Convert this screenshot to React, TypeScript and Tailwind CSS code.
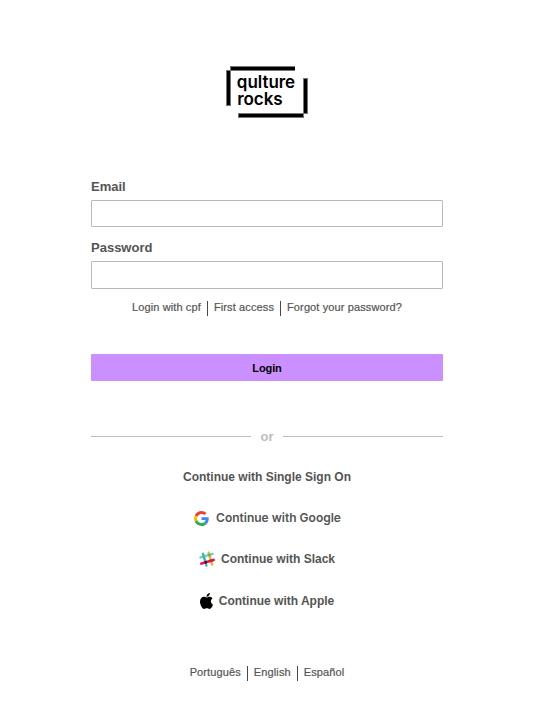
import React from "react";

function Logo() {
  return (
    <svg width="82" height="53" viewBox="226 66 82 53" role="img" aria-label="qulture rocks">
      <g fill="#777777">
        <path d="M230 66h65v5h-65zM226 70h5v36h-5zM303 78h5v36h-5zM238 113h66v5h-66z" />
      </g>
      <g fill="#000000">
        <path d="M231 67h64v3h-64zM227 71h3v34h-3zM304 79h3v34h-3zM239 114h64v3h-64z" />
        <text fontFamily="Inter, sans-serif" fontWeight="600" fontSize="17" letterSpacing="-0.03">
          <tspan x="236.8" y="88">qulture</tspan>
          <tspan x="237.3" y="105" letterSpacing="-0.1">rocks</tspan>
        </text>
      </g>
    </svg>
  );
}

function GoogleIcon() {
  return (
    <svg width="15" height="15" viewBox="0 0 48 48" aria-hidden="true">
      <path fill="#EA4335" d="M24 9.5c3.54 0 6.71 1.22 9.21 3.6l6.85-6.85C35.9 2.38 30.47 0 24 0 14.62 0 6.51 5.38 2.56 13.22l7.98 6.19C12.43 13.72 17.74 9.5 24 9.5z" />
      <path fill="#4285F4" d="M46.98 24.55c0-1.57-.15-3.09-.38-4.55H24v9.02h12.94c-.58 2.96-2.26 5.48-4.78 7.18l7.73 6c4.51-4.18 7.09-10.36 7.09-17.65z" />
      <path fill="#FBBC05" d="M10.53 28.59c-.48-1.45-.76-2.99-.76-4.59s.27-3.14.76-4.59l-7.98-6.19C.92 16.46 0 20.12 0 24s.92 7.54 2.56 10.78l7.97-6.19z" />
      <path fill="#34A853" d="M24 48c6.48 0 11.93-2.13 15.89-5.81l-7.73-6c-2.15 1.45-4.92 2.3-8.16 2.3-6.26 0-11.57-4.22-13.47-9.91l-7.98 6.19C6.51 42.62 14.62 48 24 48z" />
    </svg>
  );
}

function SlackIcon() {
  return (
    <svg width="16" height="16" viewBox="0 0 16 16" aria-hidden="true" fill="none" strokeWidth="2.4" strokeLinecap="round">
      <path stroke="#ECB22E" d="M9.6 1.6 13.2 13.6" />
      <path stroke="#3EB991" d="M4 2.8 7.4 14.5" />
      <path stroke="#70CADB" d="M1.5 6.4 13.6 2.9" />
      <path stroke="#E01765" strokeWidth="2.8" d="M2.4 12.5 14.5 9" />
      <path stroke="#3EB991" strokeLinecap="butt" d="M4.4 4.4 5.1 6.8" />
      <path stroke="#7BA940" strokeLinecap="butt" d="M10 2.8 10.7 5.2" />
      <path stroke="#361238" strokeLinecap="butt" d="M5.7 11.6 8 10.9" />
      <path stroke="#CC2027" strokeLinecap="butt" d="M11.1 10 13.4 9.3" />
    </svg>
  );
}

function AppleIcon() {
  return (
    <svg width="13" height="16" viewBox="4 32 376 448" preserveAspectRatio="none" aria-hidden="true">
      <path d="M318.7 268.7c-.2-36.7 16.4-64.4 50-84.8-18.8-26.9-47.2-41.7-84.7-44.6-35.5-2.8-74.3 20.7-88.5 20.7-15 0-49.4-19.7-76.4-19.7C63.3 141.2 4 184.8 4 273.5q0 39.3 14.4 81.2c12.8 36.7 59 126.7 107.2 125.2 25.2-.6 43-17.9 75.8-17.9 31.8 0 48.3 17.9 76.4 17.9 48.6-.7 90.4-82.5 102.6-119.3-65.2-30.7-61.7-90-61.7-91.9zm-56.6-164.2c27.3-32.4 24.8-61.9 24-72.5-24.1 1.4-52 16.4-67.9 34.9-17.5 19.8-27.8 44.3-25.6 71.9 26.1 2 49.9-11.4 69.5-34.3z" />
    </svg>
  );
}

function Divider() {
  return <span className="mx-[6px] h-[15px] w-px bg-[#484848]" />;
}

export default function App() {
  return (
    <main className="flex h-[715px] w-full flex-col items-center bg-white pt-[66px] pl-px font-['Liberation_Sans',Arial,sans-serif] text-[#545454]">
      <Logo />
      <form className="mt-[58px] flex w-[352px] flex-col" onSubmit={(e) => e.preventDefault()}>
        <label htmlFor="email" className="h-[23px] text-[13px] leading-[19px] font-bold">Email</label>
        <input id="email" className="h-[27px] rounded-[1px] border border-[#b9b9b9] px-2 outline-none" />
        <label htmlFor="password" className="mt-[11px] h-[23px] text-[13px] leading-[19px] font-bold">Password</label>
        <input id="password" type="password" className="h-[28px] rounded-[1px] border border-[#b9b9b9] px-2 outline-none" />
        <nav className="mt-[12px] flex h-[15px] justify-center text-[11px] leading-[13px] tracking-[0.12px] whitespace-nowrap [-webkit-text-stroke:0.2px_#545454]">
          <a>Login with cpf</a>
          <Divider />
          <a>First access</a>
          <Divider />
          <a>Forgot your password?</a>
        </nav>
        <button className="mt-[38px] h-[27px] rounded-[1px] bg-[#cb90ff] pt-[2px] text-[11px] font-bold tracking-[-0.1px] text-black">Login</button>
      </form>
      <div className="mt-[46px] flex h-[19px] w-[352px] items-center text-[13px] font-bold text-[#bdbdbd]">
        <span className="h-px flex-1 bg-[#bdbdbd]" />
        <span className="w-[32px] text-center leading-[19px]">or</span>
        <span className="h-px flex-1 bg-[#bdbdbd]" />
      </div>
      <div className="mt-[21px] flex flex-col items-center text-[12px] font-bold whitespace-nowrap">
        <a className="flex h-[20px] items-center">Continue with Single Sign On</a>
        <a className="mt-[21px] flex h-[20px] items-center gap-[7px] pl-px font-[Inter,sans-serif] font-semibold">
          <GoogleIcon />
          Continue with Google
        </a>
        <a className="mt-[21px] flex h-[20px] items-center gap-[6px]">
          <SlackIcon />
          Continue with Slack
        </a>
        <a className="mt-[22px] flex h-[20px] items-center gap-[6px]">
          <AppleIcon />
          Continue with Apple
        </a>
      </div>
      <nav className="mt-[55px] flex h-[15px] text-[11px] leading-[13px] tracking-[0.12px] [-webkit-text-stroke:0.2px_#545454]">
        <a>Português</a>
        <Divider />
        <a>English</a>
        <Divider />
        <a>Español</a>
      </nav>
    </main>
  );
}
